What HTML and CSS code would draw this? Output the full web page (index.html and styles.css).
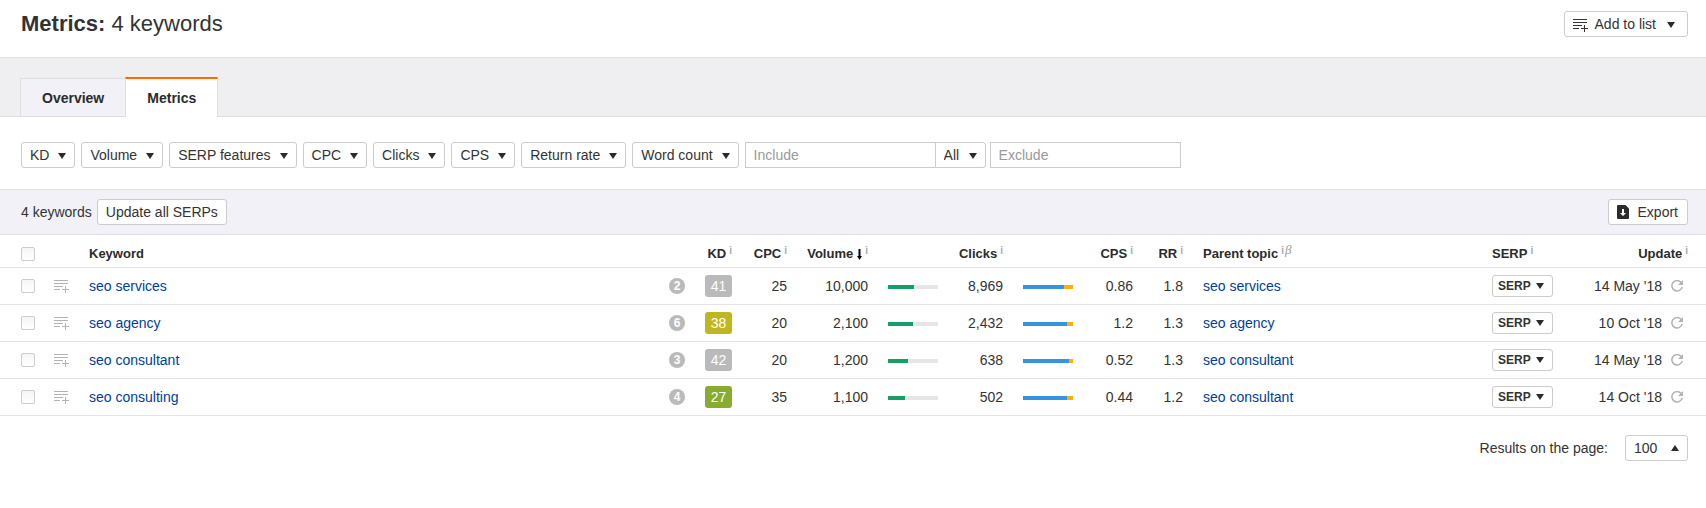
FILE: index.html
```html
<!DOCTYPE html>
<html lang="en">
<head>
    <meta charset="UTF-8">
    <meta name="viewport" content="width=device-width, initial-scale=1.0">
    <title>Metrics: 4 keywords</title>
    <link rel="stylesheet" href="styles.css">
</head>
<body>
    <!-- Shared icons -->
    <svg class="icon-defs" aria-hidden="true">
        <symbol id="icon-caret" viewBox="0 0 8 6">
            <path d="M0 0h8L4 6z" fill="currentColor"/>
        </symbol>
        <symbol id="icon-list-add" viewBox="0 0 15 13">
            <path d="M0 .5h14M0 3.5h14M0 6.5h9M0 9.5h6M8 9.5h7M11.5 6v7" fill="none" stroke="currentColor"/>
        </symbol>
        <symbol id="icon-refresh" viewBox="0 0 12 12">
            <path d="M10.2 2.6A5.2 5.2 0 1 0 11.2 6.8" fill="none" stroke="currentColor" stroke-width="1.5"/>
            <path d="M12 0v5H7z" fill="currentColor"/>
        </symbol>
    </svg>

    <header class="page-header">
        <h1 class="page-title"><b>Metrics:</b> 4 keywords</h1>
        <button type="button" class="btn">
            <svg class="icon-list"><use href="#icon-list-add"/></svg>
            Add to list
            <svg class="caret"><use href="#icon-caret"/></svg>
        </button>
    </header>

    <nav class="tabs">
        <a class="tab" href="#overview">Overview</a>
        <a class="tab tab-active" href="#metrics">Metrics</a>
    </nav>

    <form class="filters">
        <button type="button" class="btn">KD <svg class="caret"><use href="#icon-caret"/></svg></button>
        <button type="button" class="btn">Volume <svg class="caret"><use href="#icon-caret"/></svg></button>
        <button type="button" class="btn">SERP features <svg class="caret"><use href="#icon-caret"/></svg></button>
        <button type="button" class="btn">CPC <svg class="caret"><use href="#icon-caret"/></svg></button>
        <button type="button" class="btn">Clicks <svg class="caret"><use href="#icon-caret"/></svg></button>
        <button type="button" class="btn">CPS <svg class="caret"><use href="#icon-caret"/></svg></button>
        <button type="button" class="btn">Return rate <svg class="caret"><use href="#icon-caret"/></svg></button>
        <button type="button" class="btn">Word count <svg class="caret"><use href="#icon-caret"/></svg></button>
        <div class="text-filters">
            <div class="include-group">
                <input type="text" class="text-input" placeholder="Include" aria-label="Include">
                <div class="select-wrap select-mode">
                    <select class="select" aria-label="Include mode">
                        <option>All</option>
                        <option>Any</option>
                    </select>
                    <svg class="caret"><use href="#icon-caret"/></svg>
                </div>
            </div>
            <input type="text" class="text-input" placeholder="Exclude" aria-label="Exclude">
        </div>
    </form>

    <div class="toolbar">
        <div class="toolbar-left">
            <span>4 keywords</span>
            <button type="button" class="btn">Update all SERPs</button>
        </div>
        <button type="button" class="btn btn-export">
            <svg class="icon-export" viewBox="0 0 12 14">
                <path d="M1 0h7.500L12 3.500V13a1 1 0 0 1-1 1H1a1 1 0 0 1-1-1V1a1 1 0 0 1 1-1z" fill="#2b2b2b"/>
                <path d="M5 4h2v4h2L6 11 3 8h2z" fill="#fff"/>
            </svg>
            Export
        </button>
    </div>

    <table class="keywords">
        <colgroup>
            <col class="col-check">
            <col class="col-add">
            <col>
            <col class="col-count">
            <col class="col-kd">
            <col class="col-cpc">
            <col class="col-volume">
            <col class="col-bar">
            <col class="col-clicks">
            <col class="col-bar">
            <col class="col-cps">
            <col class="col-rr">
            <col class="col-parent">
            <col class="col-serp">
            <col class="col-update">
        </colgroup>
        <thead>
            <tr>
                <th><input type="checkbox" class="checkbox" aria-label="Select all"></th>
                <th></th>
                <th>Keyword</th>
                <th></th>
                <th class="num">KD<sup>i</sup></th>
                <th class="num">CPC<sup>i</sup></th>
                <th class="num">Volume<svg class="icon-sort" viewBox="0 0 5 11"><path d="M2.500 0v8" stroke="#000" stroke-width="2"/><path d="M0 7h5L2.500 11z"/></svg><sup>i</sup></th>
                <th></th>
                <th class="num">Clicks<sup>i</sup></th>
                <th></th>
                <th class="num">CPS<sup>i</sup></th>
                <th class="num">RR<sup>i</sup></th>
                <th>Parent topic<sup>i</sup><sup class="beta">β</sup></th>
                <th>SERP<sup>i</sup></th>
                <th class="num">Update<sup>i</sup></th>
            </tr>
        </thead>
        <tbody id="rows"></tbody>
    </table>

    <footer class="pager">
        <label for="pageSize">Results on the page:</label>
        <div class="select-wrap select-size">
            <select id="pageSize" class="select">
                <option>50</option>
                <option selected>100</option>
            </select>
            <svg class="caret caret-up"><use href="#icon-caret"/></svg>
        </div>
    </footer>

    <script src="script.js"></script>
</body>
</html>
```

FILE: styles.css
```css
* {
    box-sizing: border-box;
}
body {
    margin: 0;
    background-color: #fff;
    color: #333;
    font-family: "Liberation Sans", Arial, sans-serif;
    font-size: 14px;
    line-height: 18px;
}
a {
    color: #004099;
    text-decoration: none;
}
.icon-defs {
    display: none;
}

/* Buttons and fields */
.btn {
    display: inline-flex;
    align-items: center;
    gap: 9px;
    height: 26px;
    padding: 0 8px;
    border: 1px solid #ccc;
    border-radius: 3px;
    background-color: #fff;
    color: #333;
    font: inherit;
    white-space: nowrap;
    cursor: pointer;
}
.caret {
    width: 8px;
    height: 6px;
    color: #2b2b2b;
    margin-top: 1px;
}
.caret-up {
    transform: rotate(180deg);
}
.icon-list {
    width: 15px;
    height: 13px;
    margin-top: 2px;
}
.icon-export {
    width: 12px;
    height: 14px;
}
.text-input {
    width: 191px;
    height: 26px;
    padding: 0 8px;
    border: 1px solid #ccc;
    border-radius: 0;
    background-color: #fff;
    color: #333;
    font: inherit;
}
.text-input::placeholder {
    color: #999;
}
.select-wrap {
    display: grid;
    align-items: center;
}
.select-wrap > * {
    grid-area: 1 / 1;
}
.select-wrap .caret {
    justify-self: end;
    margin-right: 9px;
    pointer-events: none;
}
.select {
    width: 100%;
    height: 26px;
    padding: 0 8px;
    border: 1px solid #ccc;
    border-radius: 3px;
    background-color: #fff;
    color: #333;
    font: inherit;
    appearance: none;
}
.select-mode {
    width: 51px;
    margin-left: -1px;
}
.select-mode .select {
    border-radius: 0 3px 3px 0;
}
.select-size {
    width: 63px;
}

/* Header */
.page-header {
    display: flex;
    justify-content: space-between;
    align-items: flex-start;
    padding: 11px 18px 20px 21px;
    border-bottom: 1px solid #dedee1;
}
.page-title {
    margin: 0;
    font-size: 22px;
    font-weight: normal;
    line-height: 26px;
}
.page-header .btn {
    gap: 7px;
    padding-right: 12px;
}
.page-header .caret {
    margin-left: 4px;
}

/* Tabs */
.tabs {
    display: flex;
    align-items: flex-end;
    padding: 19px 20px 0;
    background-color: #efeff1;
    border-bottom: 1px solid #dedee1;
}
.tab {
    padding: 10px 21px 9px;
    border: 1px solid #dedee1;
    border-bottom: 0;
    background-color: #f2f1f7;
    color: #2b2b2b;
    font-weight: bold;
}
.tab-active {
    margin: 0 0 -1px -1px;
    padding-bottom: 10px;
    border-top: 2px solid #ff6b00;
    background-color: #fff;
}

/* Filters */
.filters {
    display: flex;
    gap: 6px;
    padding: 25px 21px 21px;
}
.text-filters {
    display: flex;
    gap: 4px;
}
.include-group {
    display: flex;
}

/* Toolbar */
.toolbar {
    display: flex;
    justify-content: space-between;
    align-items: center;
    padding: 9px 18px 9px 21px;
    border-top: 1px solid #dedee1;
    border-bottom: 1px solid #dedee1;
    background-color: #f2f1f7;
}
.toolbar-left {
    display: flex;
    align-items: center;
    gap: 5px;
}
.btn-export {
    padding-right: 9px;
}

/* Keywords table */
.keywords {
    width: 100%;
    table-layout: fixed;
    border-collapse: collapse;
}
.keywords th,
.keywords td {
    padding: 0 10px;
    border-bottom: 1px solid #e3e3e6;
    text-align: left;
    white-space: nowrap;
}
.keywords th {
    height: 32px;
    padding-top: 6px;
    color: #2b2b2b;
    font-size: 13px;
}
.keywords td {
    height: 37px;
}
.keywords .num {
    padding-left: 0;
    text-align: right;
}
.keywords th:first-child,
.keywords td:first-child {
    padding-left: 21px;
    padding-right: 0;
}
.keywords th:last-child,
.keywords td:last-child {
    padding-right: 18px;
}
.keywords svg,
.keywords input,
.keywords .bar {
    display: block;
}
.keywords sup {
    margin-left: 3px;
    color: #aaa;
    font-size: 10px;
    line-height: 0;
    vertical-align: 4px;
}
.keywords .beta {
    margin-left: 1px;
    color: #999;
    font-family: "Liberation Serif", serif;
    font-size: 13px;
    font-style: italic;
    font-weight: normal;
}
.keywords .icon-sort {
    display: inline-block;
    width: 5px;
    height: 11px;
    margin-left: 4px;
    vertical-align: -2px;
}
.col-check { width: 44px; }
.col-add { width: 35px; }
.col-count { width: 36px; }
.col-kd { width: 47px; }
.col-cpc { width: 55px; }
.col-volume { width: 81px; }
.col-bar { width: 70px; }
.col-clicks { width: 65px; }
.col-cps { width: 60px; }
.col-rr { width: 50px; }
.col-parent { width: 289px; }
.col-serp { width: 90px; }
.col-update { width: 134px; }

.checkbox {
    width: 14px;
    height: 14px;
    margin: 0;
    border: 1px solid #ccc;
    border-radius: 2px;
    background: linear-gradient(#f5f5f5, #fff);
    appearance: none;
}
.icon-btn {
    display: block;
    padding: 0;
    border: 0;
    background: none;
    color: #b3b3b3;
    cursor: pointer;
}
.count {
    display: block;
    width: 16px;
    height: 16px;
    border-radius: 50%;
    background-color: #bababa;
    color: #fff;
    font-size: 12px;
    font-weight: bold;
    line-height: 16px;
    text-align: center;
}
.kd {
    display: block;
    width: 27px;
    height: 22px;
    border-radius: 3px;
    background-color: #bababa;
    color: #fff;
    line-height: 22px;
    text-align: center;
}
.kd-medium { background-color: #bfb71f; }
.kd-easy { background-color: #87ad30; }
.bar {
    height: 4px;
    margin-top: 3px;
    background-color: #e6e6e8;
}
.bar span {
    display: block;
    height: 4px;
    background-color: #12a066;
}
.bar-clicks {
    background-color: #ffb000;
}
.bar-clicks span {
    background-color: #3395e0;
}
.btn-serp {
    gap: 5px;
    height: 22px;
    padding: 0 8px 0 5px;
    font-size: 12px;
    font-weight: bold;
    vertical-align: middle;
}
.updated {
    display: flex;
    justify-content: flex-end;
    align-items: center;
    gap: 9px;
    padding-right: 5px;
}
.icon-refresh {
    width: 12px;
    height: 12px;
}

/* Pager */
.pager {
    display: flex;
    justify-content: flex-end;
    align-items: center;
    gap: 17px;
    padding: 19px 18px;
}
```

FILE: script.js
```javascript
const keywords = [
    { keyword: 'seo services', count: 2, kd: 41, level: '', cpc: 25, volume: '10,000', volumeBar: 52, clicks: '8,969', clicksBar: 82, cps: '0.86', rr: '1.8', parent: 'seo services', updated: "14 May '18" },
    { keyword: 'seo agency', count: 6, kd: 38, level: 'kd-medium', cpc: 20, volume: '2,100', volumeBar: 50, clicks: '2,432', clicksBar: 88, cps: '1.2', rr: '1.3', parent: 'seo agency', updated: "10 Oct '18" },
    { keyword: 'seo consultant', count: 3, kd: 42, level: '', cpc: 20, volume: '1,200', volumeBar: 40, clicks: '638', clicksBar: 92, cps: '0.52', rr: '1.3', parent: 'seo consultant', updated: "14 May '18" },
    { keyword: 'seo consulting', count: 4, kd: 27, level: 'kd-easy', cpc: 35, volume: '1,100', volumeBar: 34, clicks: '502', clicksBar: 88, cps: '0.44', rr: '1.2', parent: 'seo consultant', updated: "14 Oct '18" }
];

document.getElementById('rows').innerHTML = keywords.map(row => `
    <tr>
        <td><input type="checkbox" class="checkbox" aria-label="Select ${row.keyword}"></td>
        <td><button type="button" class="icon-btn" aria-label="Add to list"><svg class="icon-list"><use href="#icon-list-add"/></svg></button></td>
        <td><a href="#">${row.keyword}</a></td>
        <td><span class="count">${row.count}</span></td>
        <td><span class="kd ${row.level}">${row.kd}</span></td>
        <td class="num">${row.cpc}</td>
        <td class="num">${row.volume}</td>
        <td><div class="bar"><span style="width: ${row.volumeBar}%"></span></div></td>
        <td class="num">${row.clicks}</td>
        <td><div class="bar bar-clicks"><span style="width: ${row.clicksBar}%"></span></div></td>
        <td class="num">${row.cps}</td>
        <td class="num">${row.rr}</td>
        <td><a href="#">${row.parent}</a></td>
        <td><button type="button" class="btn btn-serp">SERP <svg class="caret"><use href="#icon-caret"/></svg></button></td>
        <td><div class="updated">${row.updated}<button type="button" class="icon-btn" aria-label="Refresh"><svg class="icon-refresh"><use href="#icon-refresh"/></svg></button></div></td>
    </tr>
`).join('');
```
